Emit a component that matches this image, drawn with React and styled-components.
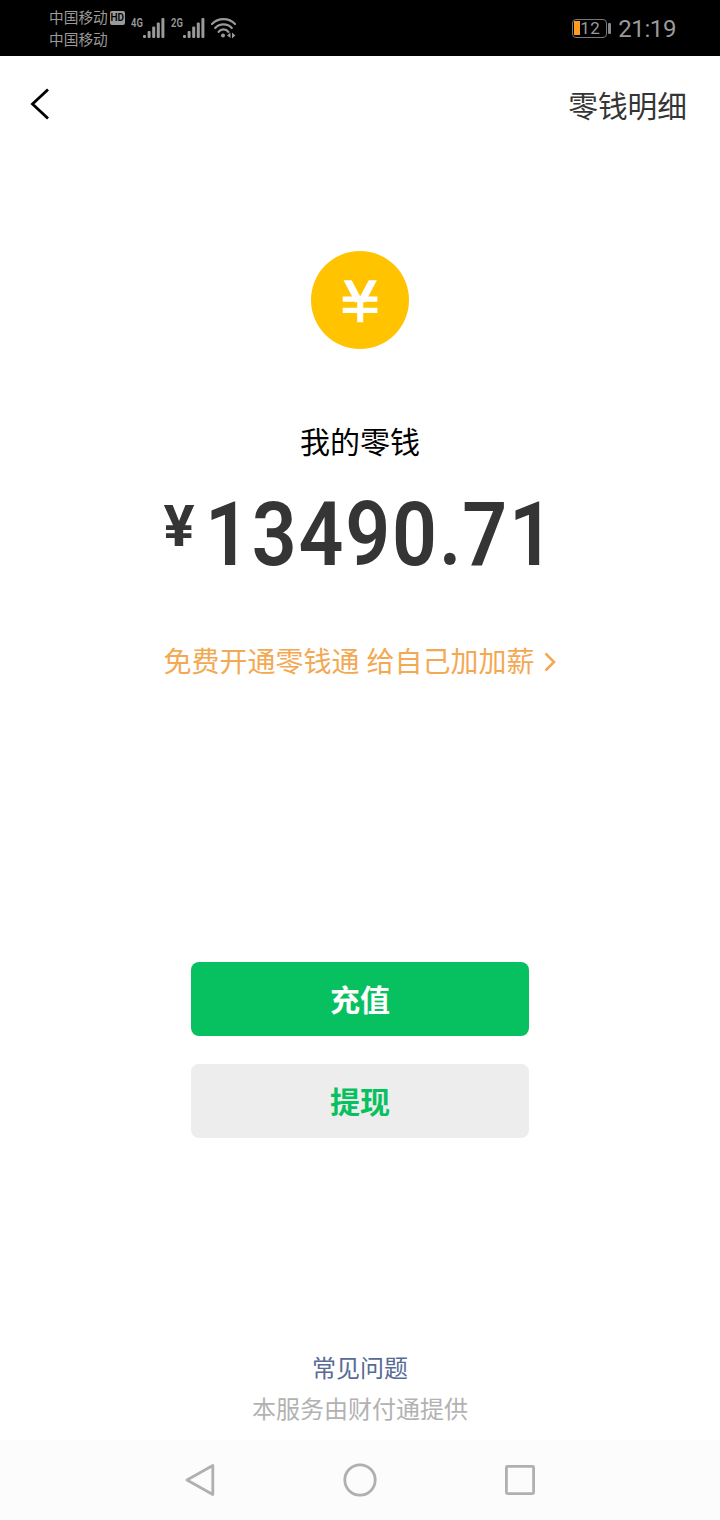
import React from 'react';
import styled, { createGlobalStyle } from 'styled-components';

const Colors = {
    Black: '#000000',
    Ink: '#353535',
    StatusGrey: '#9a9a9a',
    Gold: '#ffc300',
    Orange: '#f3a953',
    Green: '#07c160',
    ButtonGrey: '#ededed',
    LinkBlue: '#576b95',
    NoteGrey: '#b2b2b2',
    NavGrey: '#b0b0b0',
};

const GlobalStyle = createGlobalStyle`
    body {
        margin: 0;
        background-color: #fff;
        font-family: Roboto, 'Noto Sans CJK SC', sans-serif;
    }
`;

const Screen = styled.div`
    display: flex;
    flex-direction: column;
    width: 720px;
    height: 1520px;
    overflow: hidden;
    background-color: #fff;
`;

const StatusBar = styled.div`
    display: flex;
    justify-content: space-between;
    box-sizing: border-box;
    height: 56px;
    padding: 0 44px 0 49px;
    background-color: ${ Colors.Black };
    color: ${ Colors.StatusGrey };
`;

const StatusGroup = styled.div`
    display: flex;
    align-items: ${props => props.$center ? 'center' : 'flex-start' };
`;

const Carriers = styled.div`
    width: 76px;
    padding-top: 7px;
    font-size: 14.7px;
    line-height: 22px;
    white-space: nowrap;
`;

const CarrierRow = styled.div`
    display: flex;
    align-items: center;
    height: 22px;
`;

const HdBadge = styled.span`
    width: 15px;
    height: 14px;
    margin: -1px 0 0 2px;
    border-radius: 2px;
    background-color: ${ Colors.StatusGrey };
    color: ${ Colors.Black };
    font-size: 10px;
    font-weight: 600;
    line-height: 14px;
    text-align: center;
`;

const Network = styled.div`
    display: flex;
    margin-left: ${props => props.$gap }px;
    padding-top: 16px;
`;

const NetworkType = styled.span`
    width: 12px;
    font-size: 13.5px;
    font-weight: 600;
    line-height: 13px;
    white-space: nowrap;
    transform: scaleX(0.7);
    transform-origin: left;
`;

const WifiBox = styled.div`
    margin-left: 4px;
    padding-top: 17px;
`;

const Battery = styled.div`
    display: flex;
    align-items: center;
    margin-right: 7px;
`;

const BatteryBody = styled.div`
    display: flex;
    align-items: center;
    box-sizing: border-box;
    width: 35px;
    height: 19px;
    padding: 0 1px;
    border: 1px solid #777;
    border-radius: 4px;
    font-size: 17px;
    letter-spacing: 0.6px;
    line-height: 17px;
`;

const BatteryLevel = styled.span`
    width: 6px;
    height: 14px;
    background-color: #ff9a1f;
`;

const BatteryTip = styled.div`
    width: 3px;
    height: 11px;
    margin-left: 1px;
    border-radius: 1px;
    background-color: #888;
`;

const Clock = styled.div`
    padding-top: 2px;
    font-size: 24px;
    line-height: 54px;
    letter-spacing: -0.4px;
`;

const Header = styled.div`
    display: flex;
    align-items: center;
    justify-content: space-between;
    height: 96px;
    padding: 0 33px 0 28px;
`;

const HeaderLink = styled.div`
    padding-top: 6px;
    color: ${ Colors.Ink };
    font-size: 29.7px;
    line-height: 44px;
`;

const Content = styled.div`
    display: flex;
    flex: 1;
    flex-direction: column;
    align-items: center;
`;

const CoinBox = styled.div`
    height: 100px;
    margin-top: 98px;
`;

const Title = styled.div`
    margin-top: 71px;
    color: ${ Colors.Black };
    font-size: 30px;
    line-height: 44px;
`;

const Amount = styled.div`
    display: flex;
    width: 393px;
    height: 100px;
    margin-top: 20px;
    color: ${ Colors.Ink };
`;

const Currency = styled.span`
    flex: none;
    width: 41.5px;
    padding-top: 5px;
    font-size: 58px;
    font-weight: 700;
    line-height: 72px;
`;

/* narrow, widely spaced numerals */
const Digits = styled.span`
    font-size: 88.5px;
    font-weight: 600;
    letter-spacing: 2px;
    line-height: 100px;
    transform: scaleX(0.89);
    transform-origin: left;
`;

const Point = styled.span`
    letter-spacing: 1px;
`;

const Promo = styled.div`
    display: flex;
    align-items: center;
    margin-top: 57px;
    color: ${ Colors.Orange };
    font-size: 28px;
    line-height: 42px;
    white-space: pre;
`;

const Button = styled.button`
    width: 338px;
    height: 74px;
    margin: ${props => props.$top }px 0 0;
    padding: 3px 0 0;
    border: 0;
    border-radius: 8px;
    background-color: ${props => props.$primary ? Colors.Green : Colors.ButtonGrey };
    color: ${props => props.$primary ? '#fff' : Colors.Green };
    font-family: inherit;
    font-size: 30px;
    font-weight: 700;
    line-height: 71px;
`;

const Footer = styled.div`
    display: flex;
    flex-direction: column;
    align-items: center;
    height: 91px;
    font-size: 24px;
    line-height: 41px;
`;

const HelpLink = styled.div`
    color: ${ Colors.LinkBlue };
`;

const Provider = styled.div`
    color: ${ Colors.NoteGrey };
`;

const NavBar = styled.div`
    display: flex;
    align-items: center;
    justify-content: center;
    gap: 120px;
    height: 80px;
    background-color: #fcfcfc;
`;

const SignalBars = () => (
    <svg width="23" height="22" viewBox="0 0 23 22" fill={ Colors.StatusGrey }>
        <rect x="0" y="19" width="3" height="3" rx="1" />
        <rect x="4.6" y="15" width="3" height="7" rx="1" />
        <rect x="9.2" y="10.5" width="3" height="11.5" rx="1" />
        <rect x="13.8" y="6.5" width="3" height="15.5" rx="1" />
        <rect x="18.4" y="2" width="3" height="20" rx="1" />
    </svg>
);

const WifiIcon = () => (
    <svg width="27" height="22" viewBox="0 0 27 22" fill="none" stroke={ Colors.StatusGrey } strokeWidth="2.2" strokeLinecap="round">
        <path d="M2 7 C8 0.5 19 0.5 25 7" />
        <path d="M5.2 11 C9.5 6.2 17.5 6.2 21.8 11" />
        <path d="M8.6 14.8 C11 11.6 16 11.6 18.4 14.8" />
        <circle cx="13" cy="18.6" r="2" fill={ Colors.StatusGrey } stroke="none" />
        <path d="M20.5 15.6 V21 L17 18.6 Z M22 15.6 V21.4 L25.4 18.6 Z" fill={ Colors.StatusGrey } stroke="none" />
    </svg>
);

const BackIcon = () => (
    <svg width="24" height="36" viewBox="0 0 24 36" fill="none" stroke="#000" strokeWidth="2.8">
        <path d="M20 3.4 L4.5 18 L20 32.6" />
    </svg>
);

const CoinIcon = () => (
    <svg width="100" height="100" viewBox="0 0 100 100">
        <clipPath id="coin-mark"><rect x="30" y="30.3" width="40" height="42" /></clipPath>
        <circle cx="50" cy="50" r="49" fill={ Colors.Gold } />
        <g fill="none" stroke="#fff" clipPath="url(#coin-mark)">
            <path d="M35.4 26 L48.5 51 M65 26 L51.9 51" strokeWidth="7.2" />
            <path d="M50.2 47 V73" strokeWidth="6" />
            <path d="M32.7 49.2 H67.4 M32.7 60.4 H67.4" strokeWidth="5.2" />
        </g>
    </svg>
);

const ArrowIcon = () => (
    <svg width="22" height="24" viewBox="0 0 22 24" fill="none" stroke={ Colors.Orange } strokeWidth="2.6">
        <path d="M11.5 2.5 L20 11 L11.5 19.5" />
    </svg>
);

const NavIcon = ({ children }) => (
    <svg width="40" height="40" viewBox="0 0 40 40" fill="none" stroke={ Colors.NavGrey } strokeWidth="2.8" strokeLinejoin="round">
        { children }
    </svg>
);

export default function App() {
    return (
        <Screen>
            <GlobalStyle />
            <StatusBar>
                <StatusGroup>
                    <Carriers>
                        <CarrierRow>中国移动<HdBadge>HD</HdBadge></CarrierRow>
                        <CarrierRow>中国移动</CarrierRow>
                    </Carriers>
                    <Network $gap={6}>
                        <NetworkType>4G</NetworkType>
                        <SignalBars />
                    </Network>
                    <Network $gap={5}>
                        <NetworkType>2G</NetworkType>
                        <SignalBars />
                    </Network>
                    <WifiBox><WifiIcon /></WifiBox>
                </StatusGroup>
                <StatusGroup $center>
                    <Battery>
                        <BatteryBody><BatteryLevel />12</BatteryBody>
                        <BatteryTip />
                    </Battery>
                    <Clock>21:19</Clock>
                </StatusGroup>
            </StatusBar>
            <Header>
                <BackIcon />
                <HeaderLink>零钱明细</HeaderLink>
            </Header>
            <Content>
                <CoinBox><CoinIcon /></CoinBox>
                <Title>我的零钱</Title>
                <Amount>
                    <Currency>¥</Currency>
                    <Digits>13490<Point>.</Point>71</Digits>
                </Amount>
                <Promo>免费开通零钱通 给自己加加薪<ArrowIcon /></Promo>
                <Button $primary $top={278}>充值</Button>
                <Button $top={28}>提现</Button>
            </Content>
            <Footer>
                <HelpLink>常见问题</HelpLink>
                <Provider>本服务由财付通提供</Provider>
            </Footer>
            <NavBar>
                <NavIcon><path d="M32.8 5.5 V34.5 L7 20 Z" /></NavIcon>
                <NavIcon><circle cx="20" cy="20" r="15.2" /></NavIcon>
                <NavIcon><rect x="6.4" y="6.4" width="27.2" height="27.2" rx="1" /></NavIcon>
            </NavBar>
        </Screen>
    );
}
